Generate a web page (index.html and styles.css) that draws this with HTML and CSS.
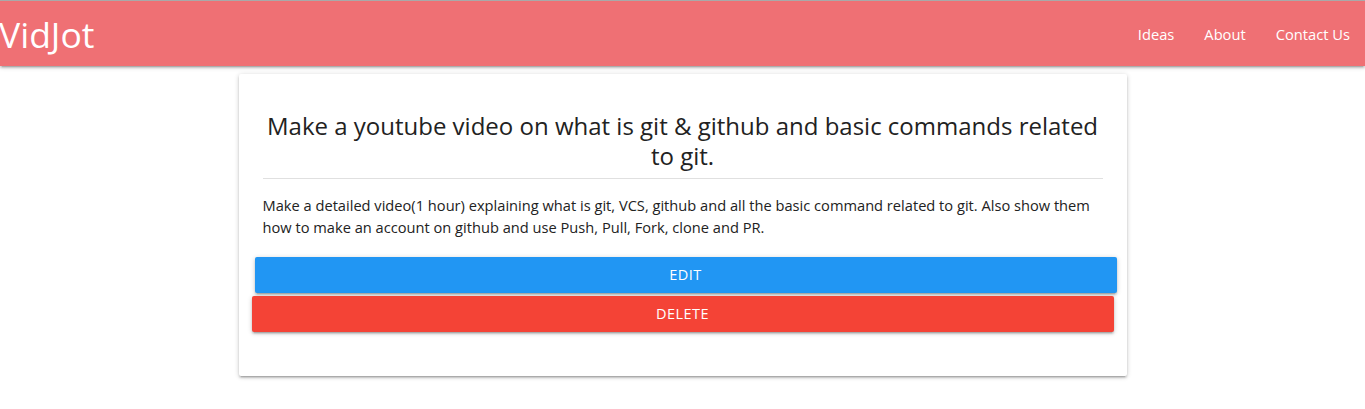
FILE: index.html
```html
<!DOCTYPE html>
<html>
<head>
<meta charset="utf-8">
<title>VidJot</title>
<link rel="stylesheet" href="styles.css">
</head>
<body>
<nav class="navbar">
  <a class="brand" href="#">VidJot</a>
  <ul class="nav-links">
    <li><a href="#">Ideas</a></li>
    <li><a href="#">About</a></li>
    <li><a href="#">Contact Us</a></li>
  </ul>
</nav>
<main class="container">
  <div class="card">
    <h4 class="card-title">Make a youtube video on what is git &amp; github and basic commands related to git.</h4>
    <p class="card-text">Make a detailed video(1 hour) explaining what is git, VCS, github and all the basic command related to git. Also show them how to make an account on github and use Push, Pull, Fork, clone and PR.</p>
    <div class="actions">
      <a class="btn btn-edit" href="#">Edit</a>
      <a class="btn btn-delete" href="#">Delete</a>
    </div>
  </div>
</main>
</body>
</html>
```
FILE: styles.css
```css
* { box-sizing: border-box; }
html, body { margin: 0; padding: 0; background: #fff; }
body {
  font-family: "Open Sans", "Noto Sans", sans-serif;
  color: rgba(0,0,0,0.87);
  border-top: 1px solid #a9a9a9;
}
a { text-decoration: none; color: inherit; }

.navbar {
  height: 65px;
  background: #ef7074;
  display: flex;
  align-items: center;
  justify-content: space-between;
  box-shadow: 0 2px 2px 0 rgba(0,0,0,0.14), 0 3px 1px -2px rgba(0,0,0,0.12), 0 1px 5px 0 rgba(0,0,0,0.2);
  position: relative;
  z-index: 1;
}
.brand {
  color: #fff;
  font-size: 35.5px;
  line-height: 64px;
  margin-left: -1px;
}
.nav-links {
  list-style: none;
  margin: 0;
  padding: 0;
  display: flex;
}
.nav-links a {
  display: block;
  color: #fff;
  font-size: 14.7px;
  padding: 0 15px;
  line-height: 66px;
}

.container {
  width: 888px;
  margin: 8px auto 30px;
}
.card {
  background: #fff;
  padding: 24px 24px 44px;
  border-radius: 2px;
  box-shadow: 0 2px 2px 0 rgba(0,0,0,0.14), 0 3px 1px -2px rgba(0,0,0,0.12), 0 1px 5px 0 rgba(0,0,0,0.2);
}
.card-title {
  margin: 13px 0 0;
  font-size: 24px;
  font-weight: 400;
  line-height: 30px;
  text-align: center;
  color: #222;
  padding-bottom: 7px;
  border-bottom: 1px solid #e0e0e0;
}
.card-text {
  margin: 15px 0 0;
  font-size: 14.65px;
  line-height: 22px;
  color: #222;
}
.actions {
  margin-top: 19px;
  display: flex;
  flex-direction: column;
  gap: 3px;
}
.btn {
  display: block;
  width: 862px;
  height: 36px;
  line-height: 36px;
  text-align: center;
  color: #fff;
  font-size: 14.5px;
  letter-spacing: .5px;
  text-transform: uppercase;
  border-radius: 2px;
  box-shadow: 0 2px 2px 0 rgba(0,0,0,0.14), 0 3px 1px -2px rgba(0,0,0,0.12), 0 1px 5px 0 rgba(0,0,0,0.2);
}
.btn-edit { background: #2196f3; margin-left: -8px; }
.btn-delete { background: #f44336; margin-left: -11px; }
```
